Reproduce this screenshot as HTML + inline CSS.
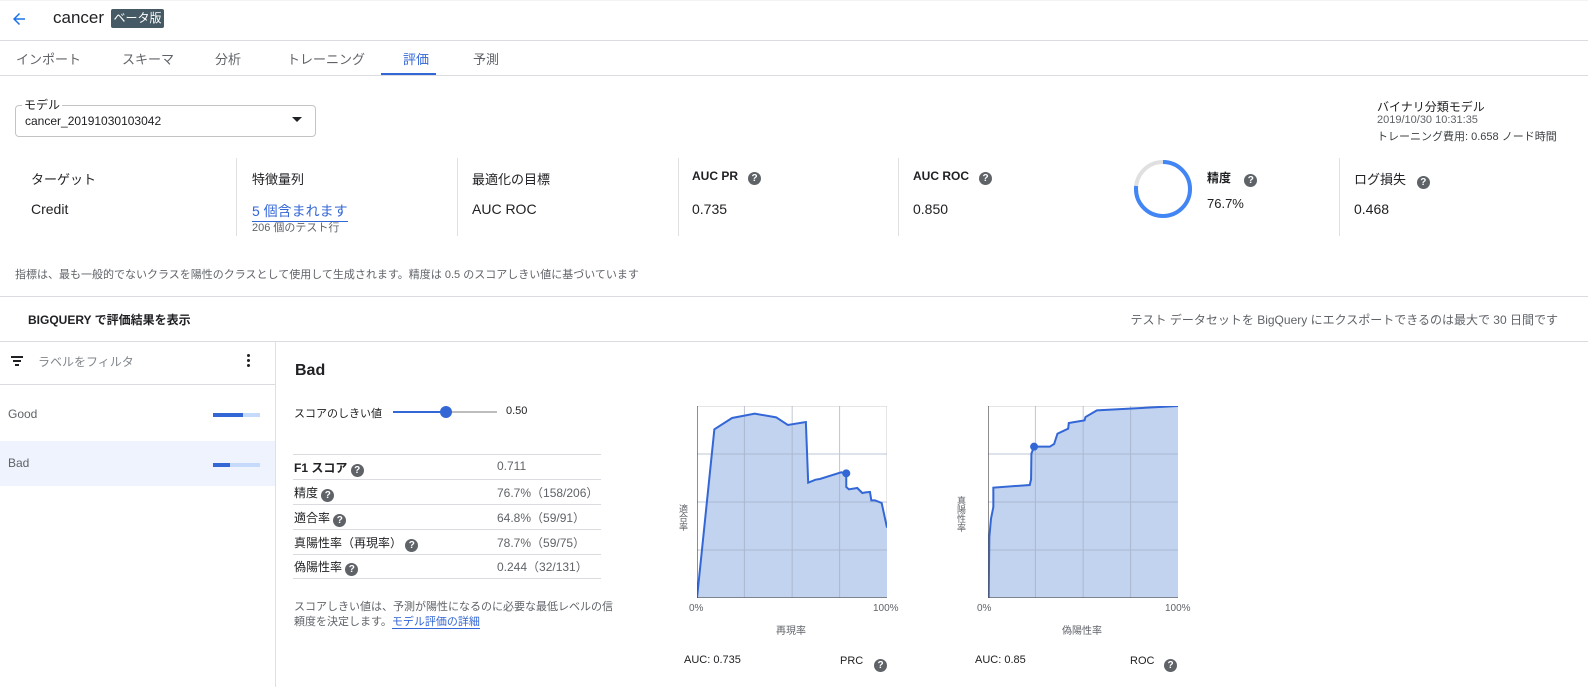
<!DOCTYPE html>
<html><head><meta charset="utf-8"><style>
body{margin:0;width:1588px;height:687px;position:relative;overflow:hidden;background:#fff;font-family:"Liberation Sans","Noto Sans CJK JP",sans-serif;color:#202124}
.a{position:absolute;white-space:nowrap}
.hl{position:absolute;height:1px;background:#dadce0}
.vl{position:absolute;width:1px;background:#e0e0e0}
.tab{position:absolute;top:49px;font-size:13px;color:#5f6368}
.lab{font-size:13px;top:169px}
.val{font-size:14px;top:201px}
.q{display:inline-block;width:13px;height:13px;border-radius:50%;background:#5f6368;color:#fff;font-size:10px;line-height:13px;text-align:center;font-weight:bold;vertical-align:-1px}
.row{position:absolute;left:294px;font-size:13px}
.rv{position:absolute;left:497px;font-size:12px;color:#5f6368}
.sm{font-size:10px;color:#5f6368}
</style></head><body>
<div class="hl" style="top:0;left:0;width:1588px;background:#f1f3f4"></div>
<svg class="a" style="left:10px;top:10px" width="18" height="18" viewBox="0 0 24 24"><path d="M20 11H7.8l5.6-5.6L12 4l-8 8 8 8 1.4-1.4L7.8 13H20z" fill="#1a73e8"/></svg>
<div class="a" style="left:53px;top:8px;font-size:17px">cancer</div>
<div class="a" style="left:111px;top:9px;width:53px;height:19px;background:#455a64;color:#fff;font-size:12px;line-height:19px;text-align:center;border-radius:2px">ベータ版</div>
<div class="hl" style="top:40px;left:0;width:1588px"></div>
<div class="tab" style="left:16px">インポート</div>
<div class="tab" style="left:122px">スキーマ</div>
<div class="tab" style="left:215px">分析</div>
<div class="tab" style="left:287px">トレーニング</div>
<div class="tab" style="left:403px;color:#3367d6">評価</div>
<div class="tab" style="left:473px">予測</div>
<div class="a" style="left:381px;top:73px;width:55px;height:2px;background:#3367d6"></div>
<div class="hl" style="top:75px;left:0;width:1588px"></div>

<div class="a" style="left:15px;top:105px;width:299px;height:30px;border:1px solid #c4c4c4;border-radius:4px"></div>
<div class="a" style="left:22px;top:96px;font-size:12px;background:#fff;padding:0 2px">モデル</div>
<div class="a" style="left:25px;top:114px;font-size:12px">cancer_20191030103042</div>
<div class="a" style="left:292px;top:117px;width:0;height:0;border-left:5px solid transparent;border-right:5px solid transparent;border-top:5px solid #202124"></div>

<div class="a" style="left:1377px;top:98px;font-size:12px">バイナリ分類モデル</div>
<div class="a" style="left:1377px;top:114px;font-size:11px;color:#5f6368">2019/10/30 10:31:35</div>
<div class="a" style="left:1377px;top:128px;font-size:11px;color:#3c4043">トレーニング費用: 0.658 ノード時間</div>

<div class="vl" style="left:236px;top:158px;height:78px"></div>
<div class="vl" style="left:457px;top:158px;height:78px"></div>
<div class="vl" style="left:678px;top:158px;height:78px"></div>
<div class="vl" style="left:898px;top:158px;height:78px"></div>
<div class="vl" style="left:1339px;top:158px;height:78px"></div>
<div class="a lab" style="left:31px">ターゲット</div><div class="a val" style="left:31px">Credit</div>
<div class="a lab" style="left:252px">特徴量列</div><div class="a val" style="left:252px;color:#3367d6;border-bottom:1px solid #3367d6">5 個含まれます</div>
<div class="a" style="left:252px;top:219px;font-size:11px;color:#5f6368">206 個のテスト行</div>
<div class="a lab" style="left:472px">最適化の目標</div><div class="a val" style="left:472px">AUC ROC</div>
<div class="a lab" style="left:692px;font-weight:bold;font-size:12px">AUC PR &nbsp;&nbsp;<span class="q">?</span></div><div class="a val" style="left:692px">0.735</div>
<div class="a lab" style="left:913px;font-weight:bold;font-size:12px">AUC ROC &nbsp;&nbsp;<span class="q">?</span></div><div class="a val" style="left:913px">0.850</div>
<svg class="a" style="left:1133px;top:159px" width="60" height="60"><circle cx="30" cy="30" r="27" fill="none" stroke="#e0e0e0" stroke-width="4"/><circle cx="30" cy="30" r="27" fill="none" stroke="#4285f4" stroke-width="4" stroke-dasharray="130.1 200" transform="rotate(-90 30 30)"/></svg>
<div class="a lab" style="left:1207px;font-weight:bold;font-size:12px">精度 &nbsp;&nbsp;&nbsp;<span class="q">?</span></div><div class="a" style="left:1207px;top:196px;font-size:13px">76.7%</div>
<div class="a lab" style="left:1354px">ログ損失 &nbsp;&nbsp;<span class="q">?</span></div><div class="a val" style="left:1354px">0.468</div>

<div class="a" style="left:15px;top:266px;font-size:11px;color:#5f6368">指標は、最も一般的でないクラスを陽性のクラスとして使用して生成されます。精度は 0.5 のスコアしきい値に基づいています</div>
<div class="hl" style="top:296px;left:0;width:1588px"></div>
<div class="a" style="left:28px;top:311px;font-size:12px;font-weight:bold">BIGQUERY で評価結果を表示</div>
<div class="a" style="right:30px;top:311px;font-size:12px;color:#5f6368">テスト データセットを BigQuery にエクスポートできるのは最大で 30 日間です</div>
<div class="hl" style="top:341px;left:0;width:1588px"></div>

<div class="vl" style="left:275px;top:342px;height:345px"></div>
<div class="a" style="left:11px;top:356px;width:12px;height:2px;background:#202124"></div>
<div class="a" style="left:13px;top:360px;width:8px;height:2px;background:#202124"></div>
<div class="a" style="left:15px;top:364px;width:4px;height:2px;background:#202124"></div>
<div class="a" style="left:38px;top:353px;font-size:12px;color:#80868b">ラベルをフィルタ</div>
<div class="a" style="left:247px;top:354px;width:3px;height:3px;background:#202124;border-radius:50%;box-shadow:0 5px 0 #202124,0 10px 0 #202124"></div>
<div class="hl" style="top:384px;left:0;width:275px"></div>
<div class="a" style="left:8px;top:407px;font-size:12px;color:#5f6368">Good</div>
<div class="a" style="left:213px;top:413px;width:47px;height:4px;background:#c6dafc"></div><div class="a" style="left:213px;top:413px;width:30px;height:4px;background:#3367d6"></div>
<div class="a" style="left:0;top:441px;width:275px;height:45px;background:#eef3fd"></div>
<div class="a" style="left:8px;top:456px;font-size:12px;color:#5f6368">Bad</div>
<div class="a" style="left:213px;top:463px;width:47px;height:4px;background:#c6dafc"></div><div class="a" style="left:213px;top:463px;width:17px;height:4px;background:#3367d6"></div>

<div class="a" style="left:295px;top:362px;font-size:16px;font-weight:bold">Bad</div>
<div class="a" style="left:294px;top:405px;font-size:11px">スコアのしきい値</div>
<div class="a" style="left:393px;top:411px;width:104px;height:2px;background:#bdbdbd"></div>
<div class="a" style="left:393px;top:411px;width:53px;height:2px;background:#3367d6"></div>
<div class="a" style="left:440px;top:406px;width:12px;height:12px;border-radius:50%;background:#3367d6"></div>
<div class="a" style="left:506px;top:405px;font-size:11px">0.50</div>

<div class="hl" style="top:454px;left:293px;width:308px"></div>
<div class="hl" style="top:479px;left:293px;width:308px"></div>
<div class="hl" style="top:504px;left:293px;width:308px"></div>
<div class="hl" style="top:529px;left:293px;width:308px"></div>
<div class="hl" style="top:554px;left:293px;width:308px"></div>
<div class="hl" style="top:578px;left:293px;width:308px"></div>
<div class="a row" style="top:459px;font-size:12px"><b>F1 スコア</b> <span class="q">?</span></div><div class="a rv" style="top:459px">0.711</div>
<div class="a row" style="top:484px;font-size:12px">精度 <span class="q">?</span></div><div class="a rv" style="top:484px">76.7%（158/206）</div>
<div class="a row" style="top:509px;font-size:12px">適合率 <span class="q">?</span></div><div class="a rv" style="top:509px">64.8%（59/91）</div>
<div class="a row" style="top:534px;font-size:12px">真陽性率（再現率） <span class="q">?</span></div><div class="a rv" style="top:534px">78.7%（59/75）</div>
<div class="a row" style="top:558px;font-size:12px">偽陽性率 <span class="q">?</span></div><div class="a rv" style="top:558px">0.244（32/131）</div>
<div class="a" style="left:294px;top:600px;font-size:11px;color:#5f6368;line-height:15px">スコアしきい値は、予測が陽性になるのに必要な最低レベルの信<br>頼度を決定します。<span style="color:#3367d6;border-bottom:1px solid #3367d6">モデル評価の詳細</span></div>

<svg class="a" style="left:697px;top:406px" width="190" height="192" viewBox="75 67 569 576" preserveAspectRatio="none">
<g stroke="#ccc" stroke-width="3"><line x1="75" y1="67" x2="644" y2="67"/><line x1="644" y1="67" x2="644" y2="643"/></g>
<path d="M75 643 L127 137 L180 103 L248 90 L312 101 L347 124 L401 115 L408 297 L430 288 L443 286 L507 266 L522 269 L522 310 L530 317 L555 313 L570 328 L580 326 L593 325 L597 350 L608 350 L628 358 L644 432 L644 643 Z" fill="#c2d3ef"/>
<g stroke="#a3aec4" stroke-width="3" opacity=".7"><line x1="217" y1="67" x2="217" y2="643"/><line x1="360" y1="67" x2="360" y2="643"/><line x1="502" y1="67" x2="502" y2="643"/><line x1="75" y1="211" x2="644" y2="211"/><line x1="75" y1="355" x2="644" y2="355"/><line x1="75" y1="499" x2="644" y2="499"/></g>
<path d="M75 643 L127 137 L180 103 L248 90 L312 101 L347 124 L401 115 L408 297 L430 288 L443 286 L507 266 L522 269 L522 310 L530 317 L555 313 L570 328 L580 326 L593 325 L597 350 L608 350 L628 358 L644 432" fill="none" stroke="#3367d6" stroke-width="6"/>
<g stroke="#555" stroke-width="4"><line x1="75" y1="67" x2="75" y2="643"/><line x1="75" y1="643" x2="644" y2="643"/></g>
<circle cx="522" cy="269" r="12" fill="#3367d6"/>
</svg>
<svg class="a" style="left:988px;top:406px" width="190" height="192" viewBox="948 67 569 576" preserveAspectRatio="none">
<g stroke="#ccc" stroke-width="3"><line x1="948" y1="67" x2="1517" y2="67"/></g>
<path d="M950 643 L952 460 L957 405 L964 370 L964 312 L1073 304 L1077 287 L1078 210 L1086 189 L1133 189 L1146 181 L1156 150 L1188 135 L1190 118 L1237 110 L1240 100 L1274 80 L1517 67 L1517 643 Z" fill="#c2d3ef"/>
<g stroke="#a3aec4" stroke-width="3" opacity=".7"><line x1="1090" y1="67" x2="1090" y2="643"/><line x1="1233" y1="67" x2="1233" y2="643"/><line x1="1375" y1="67" x2="1375" y2="643"/><line x1="948" y1="211" x2="1517" y2="211"/><line x1="948" y1="355" x2="1517" y2="355"/><line x1="948" y1="499" x2="1517" y2="499"/></g>
<path d="M950 643 L952 460 L957 405 L964 370 L964 312 L1073 304 L1077 287 L1078 210 L1086 189 L1133 189 L1146 181 L1156 150 L1188 135 L1190 118 L1237 110 L1240 100 L1274 80 L1517 67" fill="none" stroke="#3367d6" stroke-width="6"/>
<g stroke="#555" stroke-width="4"><line x1="948" y1="67" x2="948" y2="643"/><line x1="948" y1="643" x2="1517" y2="643"/></g>
<circle cx="1086" cy="189" r="12" fill="#3367d6"/>
</svg>
<div class="a sm" style="left:689px;top:603px">0%</div>
<div class="a sm" style="left:873px;top:603px">100%</div>
<div class="a sm" style="left:776px;top:622px">再現率</div>
<div class="a sm" style="left:977px;top:603px">0%</div>
<div class="a sm" style="left:1165px;top:603px">100%</div>
<div class="a sm" style="left:1062px;top:622px">偽陽性率</div>
<div class="a sm" style="left:677px;top:504px;writing-mode:vertical-rl;font-size:9px">適合率</div>
<div class="a sm" style="left:955px;top:496px;writing-mode:vertical-rl;font-size:9px">真陽性率</div>
<div class="a" style="left:684px;top:654px;font-size:11px">AUC: 0.735</div>
<div class="a" style="left:840px;top:655px;font-size:11px">PRC</div>
<div class="a" style="left:874px;top:654px"><span class="q">?</span></div>
<div class="a" style="left:975px;top:654px;font-size:11px">AUC: 0.85</div>
<div class="a" style="left:1130px;top:655px;font-size:11px">ROC</div>
<div class="a" style="left:1164px;top:654px"><span class="q">?</span></div>
</body></html>
